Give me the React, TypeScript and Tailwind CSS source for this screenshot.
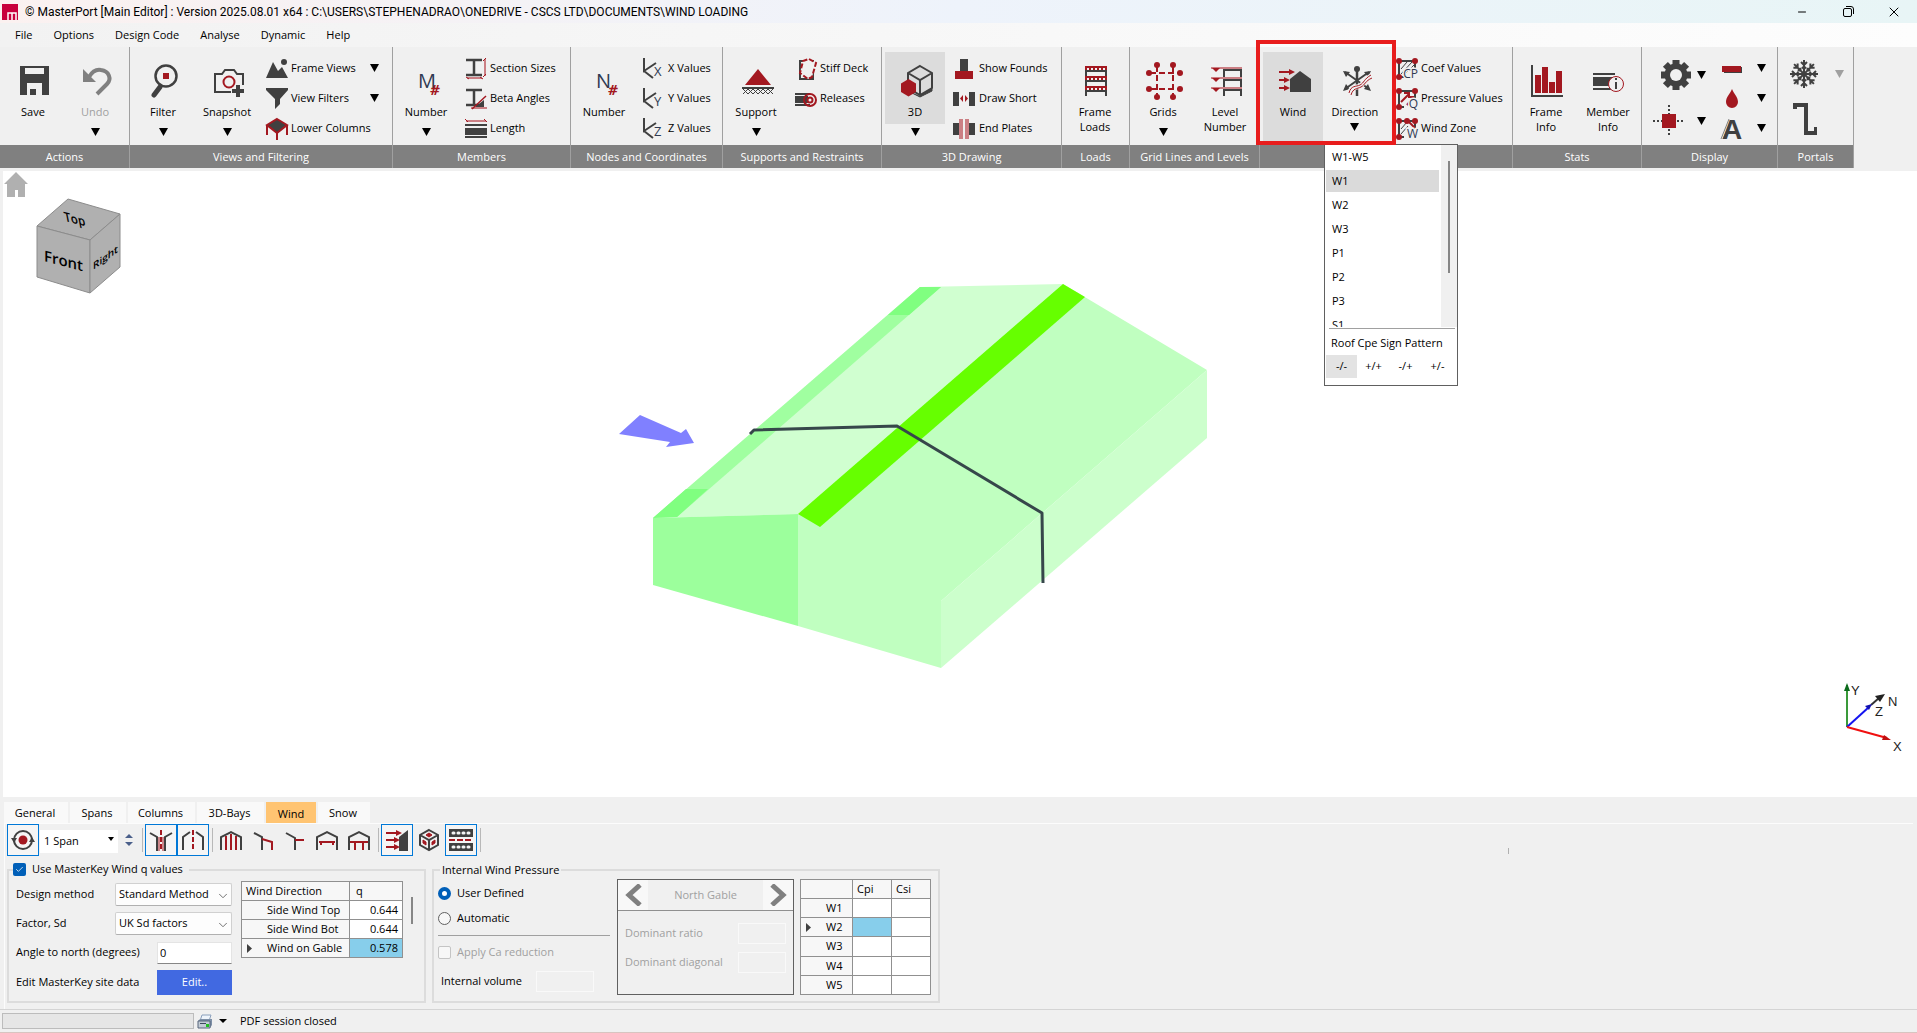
import React from 'react';
import { Check, ChevronDown, Minus, X } from 'lucide-react';

const DARK = '#404040';
const RED = '#a31820';
const PINK = '#cb7f84';
const NAVY = '#2f3a52';

type Kids = { children?: React.ReactNode };

function Big({ children }: Kids) {
    return <svg width="40" height="40" viewBox="0 0 40 40" fill="none" className="shrink-0 overflow-visible">{children}</svg>;
}

function Small({ children }: Kids) {
    return <svg width="24" height="24" viewBox="0 0 24 24" fill="none" className="shrink-0 overflow-visible">{children}</svg>;
}

function Tri({ color = '#000' }: { color?: string }) {
    return (
        <svg width="9" height="8" viewBox="0 0 9 8" className="shrink-0">
            <path d="M0 0h9L4.5 8z" fill={color} />
        </svg>
    );
}

/* ---------- large ribbon icons ---------- */

const SaveIcon = () => (
    <Big>
        <path d="M7 6h29v29H7z" fill={DARK} />
        <path d="M12 8h19v6H12zM14 23h15v12h-6v-6h-6v6h-3z" fill="#f0f0f0" />
    </Big>
);

const UndoIcon = () => (
    <Big>
        <path d="M8 9v13h13z" fill="#808080" />
        <path d="M14 17c3-5 7-8 12-7 8 1 11 9 6 14L22 34" stroke="#808080" strokeWidth="4" />
    </Big>
);

const FilterIcon = () => (
    <Big>
        <circle cx="23" cy="16" r="10.5" stroke={DARK} strokeWidth="2.5" />
        <path d="M20 13h6v6h-6z" fill={RED} />
        <path d="M17 27l-6 8" stroke={DARK} strokeWidth="5" strokeLinecap="round" />
    </Big>
);

const SnapshotIcon = () => (
    <Big>
        <path d="M24 32H8V14h7l3-4h9l3 4h6v11" stroke={DARK} strokeWidth="2" />
        <circle cx="22" cy="22" r="5.500" stroke={RED} strokeWidth="2" />
        <path d="M31 25v12M25 31h12" stroke={DARK} strokeWidth="4" />
    </Big>
);

const NumberIcon = ({ letter }: { letter: string }) => (
    <Big>
        <text x="12" y="28" fontSize="20" fill={NAVY} fontFamily="Open Sans, sans-serif">{letter}</text>
        <text x="24" y="35" fontSize="15" fontWeight="700" fontStyle="italic" fill={RED} fontFamily="Open Sans, sans-serif">#</text>
    </Big>
);

const SupportIcon = () => (
    <Big>
        <path d="M22 9l13 16H9z" fill={RED} />
        <path d="M6 28h32" stroke={DARK} strokeWidth="2" />
        <path d="M7 29l5 5 5-5 5 5 5-5 5 5 5-5M7 34l5-5 5 5 5-5 5 5 5-5 5 5" stroke={DARK} />
    </Big>
);

const CubeIcon = () => (
    <Big>
        <path d="M25 6l12 7v15l-12 7-12-7V13zM13 13l12 7 12-7M25 20v15" stroke={DARK} strokeWidth="2" />
        <path d="M25 36l12-7v2l-12 6-12-6" fill={DARK} stroke={DARK} />
        <path d="M13.500 19l7.500 4.500v8.500l-7.500 4.500L6 32v-8.500z" fill={RED} />
    </Big>
);

const FrameLoadsIcon = () => (
    <Big>
        <path d="M11 6v30M31 6v30M11 11h20M11 21h20M11 31h20" stroke={DARK} strokeWidth="2" />
        {[6, 16, 26].map((y) => (
            <g key={y}>
                <path d={`M10 ${y + 2}h22`} stroke={RED} strokeWidth="4" />
                <path d={`M12 ${y + 3}h19`} stroke="#f0f0f0" strokeWidth="2" strokeDasharray="2 2" />
            </g>
        ))}
    </Big>
);

const GridsIcon = () => (
    <Big>
        <path d="M14 5v32M30 5v32M6 13h32M6 29h32" stroke={RED} strokeWidth="2" strokeDasharray="6 3" strokeDashoffset="-1" />
        {[[14, 5], [30, 5], [6, 13], [37, 13], [6, 29], [37, 29], [14, 37], [30, 37]].map(([x, y]) => (
            <circle key={`${x}-${y}`} cx={x} cy={y} r="3" fill={RED} />
        ))}
    </Big>
);

const LevelIcon = () => (
    <Big>
        <path d="M19 9v27M36 9v27M19 10h17M19 20h17M19 30h17" stroke={DARK} strokeWidth="2" />
        {[8, 18, 28].map((y) => (
            <g key={y}>
                <path d={`M6 ${y}h31`} stroke={PINK} strokeWidth="2" />
                <path d={`M7 ${y}h8l-4 4z`} fill={RED} />
            </g>
        ))}
    </Big>
);

const WindIcon = () => (
    <Big>
        <path d="M27 11l11 8v13H17V19z" fill={DARK} />
        <path d="M6 12h11M6 20h6M6 28h6" stroke={RED} strokeWidth="2" />
        <path d="M16 9l6 3-6 3zM11 17l6 3-6 3zM11 25l6 3-6 3z" fill={RED} />
    </Big>
);

const DirectionIcon = () => (
    <Big>
        <path d="M22 8v28" stroke={DARK} strokeWidth="2.500" />
        <path d="M10 12l24 17M34 12L10 29" stroke={DARK} strokeWidth="2" />
        <circle cx="22" cy="9" r="3" fill={DARK} />
        <path d="M8 11l7 1-4 5zM36 11l-7 1 4 5zM8 31l7-2-4-5zM36 31l-7-2 4-5z" fill={DARK} />
        <path d="M14 34c2-8 7-6 11-8s4-7 11-10" stroke="#f0f0f0" strokeWidth="5" />
        <path d="M14 33c2-8 7-6 11-8s4-6 11-10M16 35c2-7 6-6 10-8s4-6 11-9" stroke={RED} />
    </Big>
);

const FrameInfoIcon = () => (
    <Big>
        <path d="M6 5v31h31" stroke={DARK} strokeWidth="2" />
        <path d="M9 15h6v18H9zM16 7h6v26h-6zM23 22h6v11h-6zM30 11h6v22h-6z" fill={RED} />
    </Big>
);

const MemberInfoIcon = () => (
    <Big>
        <path d="M5 14h22M5 29h22" stroke={DARK} strokeWidth="2" />
        <path d="M5 17h22v9H5z" fill={DARK} />
        <circle cx="28" cy="24" r="7.500" fill="#f0f0f0" stroke={RED} />
        <path d="M28 22v7M28 18v2" stroke={DARK} strokeWidth="2" />
    </Big>
);

/* ---------- small ribbon icons ---------- */

const IBeam = () => <path d="M2 4h16M2 19h16M10 4v15" stroke={DARK} strokeWidth="2.500" />;

const smallIcons: Record<string, React.ReactNode> = {
    views: <><path d="M1 22L8 6l5 9 4-4 6 11z" fill={DARK} /><circle cx="19" cy="6" r="3" fill={DARK} /></>,
    funnel: <path d="M1 2h22v2l-8 9v5l-5 5V13L1 4z" fill={DARK} />,
    lower: <><path d="M12 3l10 6-10 8L2 9z" fill={DARK} stroke={RED} strokeWidth="2" /><path d="M2 9v10M12 17v7M22 9v10" stroke={RED} strokeWidth="2" /></>,
    section: <><IBeam /><path d="M21 3v17M3 22h15" stroke={PINK} strokeWidth="2" /><path d="M19 5l3-3M19 21l3-3M2 21l3 2M16 21l3 2" stroke={RED} /></>,
    beta: <><IBeam /><path d="M20 14v7h-9z" fill={DARK} /><path d="M7 22h16" stroke={PINK} strokeWidth="2" /><path d="M8 23L22 10" stroke={RED} strokeWidth="1.500" /></>,
    length: <><path d="M2 5h20" stroke={PINK} strokeWidth="2" /><path d="M1 3l3 3M20 3l3 3" stroke={RED} /><path d="M1 9h22M1 21h22" stroke={DARK} strokeWidth="2" /><path d="M1 12h22v7H1z" fill={DARK} /></>,
    deck: <><path d="M6 5h13v18H6z" stroke={DARK} strokeWidth="2" /><path d="M15 3l7 4-4 14-4 2-8-6 3-12z" fill="#f0f0f0" stroke={RED} strokeWidth="2" strokeDasharray="5 2" /></>,
    releases: <><path d="M1 8h15M1 19h15" stroke={DARK} strokeWidth="2" /><path d="M1 10h13v7H1z" fill={DARK} /><circle cx="16" cy="14" r="6" stroke={RED} strokeWidth="2" /><circle cx="16" cy="14" r="2.500" stroke={RED} strokeWidth="2" /></>,
    founds: <><path d="M7 3h8v12H7z" fill={DARK} /><path d="M2 15h18v8H2z" fill={RED} /></>,
    short: <><path d="M0 6h6v14H0zM16 6h6v14h-6z" fill={DARK} /><path d="M10 9v7l-3-3.500zM12 9v7l3-3.500z" fill={RED} /></>,
    plates: <><path d="M0 7h6v12H0zM16 7h6v12h-6z" fill={DARK} /><path d="M6 3h4v20H6zM12 3h4v20h-4z" fill={PINK} /></>,
};

function AxisIcon({ letter }: { letter: string }) {
    return (
        <Small>
            <path d="M2 2v13l12-8M2 15l9 7" stroke={DARK} strokeWidth="2" />
            <text x="12" y="20" fontSize="13" fill={NAVY} fontFamily="Open Sans, sans-serif">{letter}</text>
        </Small>
    );
}

function ZoneIcon({ label, kind }: { label: string; kind: 'hatch' | 'arrows' | 'split' }) {
    return (
        <Small>
            <path d="M4 21V5h16v7M4 21h5" stroke={DARK} strokeWidth="2" />
            {kind === 'hatch' && <path d="M6 13l6-7M6 18L17 6M10 18l9-9" stroke={DARK} />}
            {kind === 'arrows' && <path d="M6 16l8-8M12 19l6-7M9 7h5v5M14 11h4v4" stroke={RED} strokeWidth="2" />}
            {kind === 'split' && <><path d="M6 13l6-7M6 18l7-8" stroke={DARK} /><path d="M13 5l7 7" stroke={RED} strokeWidth="2" /></>}
            <circle cx="4" cy="5" r="3" fill={RED} />
            <circle cx="20" cy="5" r="3" fill={RED} />
            <circle cx="4" cy="21" r="3" fill={RED} />
            {kind === 'split' && <circle cx="12" cy="5" r="3" fill={RED} />}
            <text x="23" y="22" textAnchor="end" fontSize="12" fill={NAVY} stroke="#f0f0f0" strokeWidth="3" paintOrder="stroke" fontFamily="Open Sans, sans-serif">{label}</text>
        </Small>
    );
}

/* ---------- ribbon parts ---------- */

function BigButton({ icon, label, active, disabled, tall, arrow }: {
    icon: React.ReactNode; label: React.ReactNode; active?: boolean; disabled?: boolean; tall?: boolean; arrow?: boolean;
}) {
    return (
        <div className="flex w-15 shrink-0 flex-col pt-[5px]">
            <button className={`flex flex-col items-center gap-1 pt-2 leading-[15px] ${tall ? 'h-[90px]' : 'h-18'} ${active ? 'bg-[#dcdcdc]' : ''} ${disabled ? 'text-[#a0a0a0]' : ''}`}>
                {icon}
                <span>{label}</span>
            </button>
            {arrow && (
                <button aria-label="More" className="flex h-4 items-center justify-center">
                    <Tri />
                </button>
            )}
        </div>
    );
}

function SmallButton({ icon, label, arrow }: { icon: React.ReactNode; label: string; arrow?: boolean }) {
    return (
        <button className="flex h-[30px] w-full items-center gap-0.5 whitespace-nowrap text-left">
            {icon}
            <span className="flex-1">{label}</span>
            {arrow && <Tri />}
        </button>
    );
}

function Group({ label, width, children }: Kids & { label: string; width: string }) {
    return (
        <section className={`relative flex shrink-0 flex-col border-r border-[#a0a0a0] ${width}`}>
            <div className="flex h-[98px] px-[3px]">{children}</div>
            <h2 className="h-[23px] bg-[#808080] text-center leading-[23px] text-white">{label}</h2>
        </section>
    );
}

function DirectionMenu() {
    return (
        <div className="absolute left-16 top-[97px] z-20 flex h-[242px] w-[134px] flex-col border border-[#606060] bg-white text-[11px]">
            <div className="flex h-[182px] overflow-hidden">
                <ul className="flex-1 pl-px">
                    {['W1-W5', 'W1', 'W2', 'W3', 'P1', 'P2', 'P3', 'S1'].map((d) => (
                        <li key={d} className="h-6 pt-px">
                            <button className={`h-[22px] w-[113px] pl-1.5 text-left ${d === 'W1' ? 'bg-[#dadada]' : ''}`}>{d}</button>
                        </li>
                    ))}
                </ul>
                <div className="w-4 bg-[#f0f0f0] pt-4">
                    <div className="mx-auto h-[112px] w-0.5 bg-[#868686]" />
                </div>
            </div>
            <div className="ml-1 mr-0.5 mt-px border-t border-[#a0a0a0]" />
            <p className="pb-0.5 pl-1.5 pt-1 leading-5">Roof Cpe Sign Pattern</p>
            <div className="flex gap-px pl-px">
                {['-/-', '+/+', '-/+', '+/-'].map((s, i) => (
                    <button key={s} className={`h-[23px] w-[31px] ${i === 0 ? 'bg-[#e3e3e3]' : ''}`}>{s}</button>
                ))}
            </div>
        </div>
    );
}

function Gear() {
    return (
        <svg width="30" height="30" viewBox="-15 -15 30 30">
            {[0, 45, 90, 135].map((a) => (
                <rect key={a} x="-3.500" y="-15" width="7" height="30" fill={DARK} transform={`rotate(${a})`} />
            ))}
            <circle r="11.500" fill={DARK} />
            <circle r="6" fill="#f0f0f0" />
        </svg>
    );
}

function Snowflake() {
    return (
        <svg width="30" height="30" viewBox="-15 -15 30 30" fill="none" stroke={DARK} strokeWidth="2">
            {[0, 45, 90, 135, 180, 225, 270, 315].map((a) => (
                <path key={a} d="M0 0v-14M-3-12l3 3 3-3M-2-7l2 2 2-2" transform={`rotate(${a})`} />
            ))}
        </svg>
    );
}

function Ribbon() {
    return (
        <div className="flex h-[121px] text-[11px]">
            <Group label="Actions" width="w-[130px]">
                <div className="flex gap-0.5">
                    <BigButton icon={<SaveIcon />} label="Save" />
                    <BigButton icon={<UndoIcon />} label="Undo" disabled arrow />
                </div>
            </Group>
            <Group label="Views and Filtering" width="w-[263px]">
                <div className="flex gap-1">
                    <BigButton icon={<FilterIcon />} label="Filter" arrow />
                    <BigButton icon={<SnapshotIcon />} label="Snapshot" arrow />
                </div>
                <div className="ml-2 w-[114px] pt-1.5">
                    <SmallButton icon={<Small>{smallIcons.views}</Small>} label="Frame Views" arrow />
                    <SmallButton icon={<Small>{smallIcons.funnel}</Small>} label="View Filters" arrow />
                    <SmallButton icon={<Small>{smallIcons.lower}</Small>} label="Lower Columns" />
                </div>
            </Group>
            <Group label="Members" width="w-[178px]">
                <BigButton icon={<NumberIcon letter="M" />} label="Number" arrow />
                <div className="ml-2 pt-1.5">
                    <SmallButton icon={<Small>{smallIcons.section}</Small>} label="Section Sizes" />
                    <SmallButton icon={<Small>{smallIcons.beta}</Small>} label="Beta Angles" />
                    <SmallButton icon={<Small>{smallIcons.length}</Small>} label="Length" />
                </div>
            </Group>
            <Group label="Nodes and Coordinates" width="w-[152px]">
                <BigButton icon={<NumberIcon letter="N" />} label="Number" />
                <div className="ml-2 pt-1.5">
                    <SmallButton icon={<AxisIcon letter="X" />} label="X Values" />
                    <SmallButton icon={<AxisIcon letter="Y" />} label="Y Values" />
                    <SmallButton icon={<AxisIcon letter="Z" />} label="Z Values" />
                </div>
            </Group>
            <Group label="Supports and Restraints" width="w-[159px]">
                <BigButton icon={<SupportIcon />} label="Support" arrow />
                <div className="ml-2 pt-1.5">
                    <SmallButton icon={<Small>{smallIcons.deck}</Small>} label="Stiff Deck" />
                    <SmallButton icon={<Small>{smallIcons.releases}</Small>} label="Releases" />
                </div>
            </Group>
            <Group label="3D Drawing" width="w-[180px]">
                <BigButton icon={<CubeIcon />} label="3D" active arrow />
                <div className="ml-2 pt-1.5">
                    <SmallButton icon={<Small>{smallIcons.founds}</Small>} label="Show Founds" />
                    <SmallButton icon={<Small>{smallIcons.short}</Small>} label="Draw Short" />
                    <SmallButton icon={<Small>{smallIcons.plates}</Small>} label="End Plates" />
                </div>
            </Group>
            <Group label="Loads" width="w-[68px]">
                <BigButton icon={<FrameLoadsIcon />} label={<>Frame<br />Loads</>} />
            </Group>
            <Group label="Grid Lines and Levels" width="w-[130px]">
                <div className="flex gap-0.5">
                    <BigButton icon={<GridsIcon />} label="Grids" arrow />
                    <BigButton icon={<LevelIcon />} label={<>Level<br />Number</>} />
                </div>
            </Group>
            <Group label="Wind" width="w-[253px]">
                <div className="flex gap-0.5">
                    <BigButton icon={<WindIcon />} label="Wind" active tall />
                    <BigButton icon={<DirectionIcon />} label={<span className="flex flex-col items-center gap-1">Direction<Tri /></span>} />
                </div>
                <div className="ml-2.5 pt-1.5">
                    <SmallButton icon={<ZoneIcon label="CP" kind="hatch" />} label="Coef Values" />
                    <SmallButton icon={<ZoneIcon label="Q" kind="arrows" />} label="Pressure Values" />
                    <SmallButton icon={<ZoneIcon label="W" kind="split" />} label="Wind Zone" />
                </div>
                <div className="pointer-events-none absolute -left-1 -top-[7px] z-30 h-[105px] w-[140px] border-4 border-[#e81c1c]" />
                <DirectionMenu />
            </Group>
            <Group label="Stats" width="w-[129px]">
                <div className="flex gap-0.5">
                    <BigButton icon={<FrameInfoIcon />} label={<>Frame<br />Info</>} />
                    <BigButton icon={<MemberInfoIcon />} label={<>Member<br />Info</>} />
                </div>
            </Group>
            <Group label="Display" width="w-[136px]">
                <div className="flex w-[61px] flex-col gap-2 pt-3">
                    <button aria-label="Settings" className="flex h-8 items-center justify-end gap-1.5">
                        <Gear />
                        <Tri />
                    </button>
                    <button aria-label="Origin" className="flex h-11 items-center justify-end gap-3">
                        <svg width="32" height="32" viewBox="0 0 32 32" stroke={DARK} strokeWidth="2">
                            <path d="M16 0v32M0 16h32" strokeDasharray="2 2" />
                            <path d="M10 10h12v12H10z" fill={RED} stroke={RED} />
                        </svg>
                        <Tri />
                    </button>
                </div>
                <div className="ml-3.5 w-[46px] pt-1.5">
                    <button aria-label="Line style" className="flex h-[30px] w-full items-center justify-between">
                        <Small><path d="M4 11h18v6H4z" fill={DARK} /><path d="M2 10h19v6H2z" fill={RED} /></Small>
                        <Tri />
                    </button>
                    <button aria-label="Colour" className="flex h-[30px] w-full items-center justify-between">
                        <Small><path d="M12 3c2 5 6 8 6 13a6 6 0 0 1-12 0c0-5 4-8 6-13z" fill={RED} /></Small>
                        <Tri />
                    </button>
                    <button aria-label="Font" className="flex h-[30px] w-full items-center justify-between">
                        <Small>
                            <path d="M1 23L9 3M3 23l8-18" stroke="#808080" />
                            <text x="2" y="23" fontSize="28" fontWeight="700" fill={DARK} fontFamily="Liberation Sans, sans-serif">A</text>
                        </Small>
                        <Tri />
                    </button>
                </div>
            </Group>
            <Group label="Portals" width="w-[76px]">
                <div className="flex flex-col gap-3 pl-2 pt-3">
                    <button aria-label="Snow" className="flex items-center gap-4">
                        <Snowflake />
                        <Tri color="#a0a0a0" />
                    </button>
                    <button aria-label="Purlins" className="ml-1 w-6">
                        <svg width="24" height="36" viewBox="0 0 24 36" fill="none">
                            <path d="M2 8V4h11v28h10v-6" stroke={DARK} strokeWidth="4" />
                        </svg>
                    </button>
                </div>
            </Group>
        </div>
    );
}

/* ---------- 3D view ---------- */

function Viewport() {
    return (
        <main className="relative ml-[3px] min-h-[500px] flex-1 overflow-hidden bg-white">
            <button aria-label="Home view" className="absolute left-px top-px">
                <svg width="24" height="25" viewBox="0 0 24 25">
                    <path d="M12 0l12 12h-3v13h-7v-7h-3v7H3V12H0z" fill="#b0b0b0" />
                </svg>
            </button>
            <svg className="absolute left-8 top-[26px]" width="88" height="98" viewBox="0 0 88 98">
                <g fill="#b0b0b0" stroke="#8c8c8c" strokeLinejoin="round">
                    <path d="M33 2l52 15-30 26L2 29z" />
                    <path d="M2 29l53 14v53L2 80z" />
                    <path d="M55 43l30-26v53L55 96z" />
                </g>
                <g fontFamily="Open Sans, sans-serif" fontWeight="600" fill="#000">
                    <text fontSize="15" transform="translate(9 64) skewY(15)">Front</text>
                    <text fontSize="12" transform="translate(30 24) rotate(14) skewX(25)">Top</text>
                    <text fontSize="10" transform="translate(58 73) skewY(-36)">Right</text>
                </g>
            </svg>
            <svg className="absolute left-[597px] top-[89px]" width="640" height="420" viewBox="0 0 640 420">
                <path d="M53 258L320 27l143-3-265 230z" fill="#d0ffd0" />
                <path d="M53 258L320 27h21L77 257z" fill="#a0ffa0" />
                <path d="M53 258l33-29h22l-31 28zM288 55l32-28h21l-32 28z" fill="#80ff80" />
                <path d="M198 254L463 24l144 86-266 231v67l-143-42z" fill="#c0ffc0" />
                <path d="M198 254L463 24l22 13-265 230z" fill="#66ff00" />
                <path d="M53 258l145-4v112L53 325z" fill="#9cff9c" />
                <path d="M341 341l266-231v68L341 408z" fill="#ccffcc" />
                <path d="M150 174l4-4 143-4 145 87 1 70" fill="none" stroke="#36474a" strokeWidth="3" strokeLinejoin="round" />
                <path d="M40 155l41 18 5-4 8 14-28 4 4-5-51-8z" fill="#8080ff" />
            </svg>
            <svg className="absolute bottom-10 right-[7px]" width="70" height="80" viewBox="0 0 70 80">
                <path d="M7 50V8" stroke="#3a9a3a" strokeWidth="2" />
                <path d="M4 14l3-8 3 8z" fill="#0c6b1c" />
                <path d="M31 28l8-7" stroke="#333" strokeWidth="2" />
                <path d="M45 17l-5 8-5-6z" fill="#222" />
                <path d="M7 50l22-20" stroke="#1414f0" strokeWidth="2" />
                <path d="M32 27l-3 6-4-4z" fill="#1010b0" />
                <path d="M7 50l40 11" stroke="#f01010" strokeWidth="2" />
                <path d="M51 63l-9 0 2-5z" fill="#c01010" />
                <g fontFamily="Liberation Sans, sans-serif" fontSize="13" fill="#222">
                    <text x="11" y="18">Y</text>
                    <text x="48" y="29">N</text>
                    <text x="35" y="39">Z</text>
                    <text x="53" y="74">X</text>
                </g>
            </svg>
        </main>
    );
}

/* ---------- bottom panel ---------- */

const tabs = [
    { name: 'General', width: 'w-16' },
    { name: 'Spans', width: 'w-14' },
    { name: 'Columns', width: 'w-[67px]' },
    { name: '3D-Bays', width: 'w-[67px]' },
    { name: 'Wind', width: 'w-[50px]' },
    { name: 'Snow', width: 'w-[52px]' },
];

function Tool({ name, on, children }: Kids & { name: string; on?: boolean }) {
    return (
        <button aria-label={name} className={`flex size-8 items-center justify-center border ${on ? 'border-[#0078d7] bg-[#f5f5f5]' : 'border-transparent'}`}>
            <Small>{children}</Small>
        </button>
    );
}

const Sep = () => <div className="ml-[3px] mr-0.5 h-6 w-px bg-[#b8b8b8]" />;

function Toolbar() {
    return (
        <div className="flex h-8 items-center pl-0.5">
            <Tool name="Rotate" on>
                <circle cx="12" cy="12" r="9" stroke={DARK} strokeWidth="2" />
                <path d="M0 10h6l-3 5zM18 14h6l-3-5z" fill={DARK} />
                <circle cx="12" cy="12" r="4.500" fill={RED} />
            </Tool>
            <div className="relative ml-px">
                <select aria-label="Span" className="h-[23px] w-[78px] appearance-none bg-white pl-1 text-[11px]">
                    <option>1 Span</option>
                </select>
                <svg className="pointer-events-none absolute right-1 top-2.5" width="6" height="4"><path d="M0 0h6L3 4z" /></svg>
            </div>
            <button aria-label="Step span" className="mx-[5px] flex w-[11px] flex-col items-center gap-1">
                <svg width="8" height="4"><path d="M0 4h8L4 0z" fill="#4a5f8a" /></svg>
                <svg width="8" height="4"><path d="M0 0h8L4 4z" fill="#4a5f8a" /></svg>
            </button>
            <Sep />
            <Tool name="Inner haunch" on>
                <path d="M1 5l7 4v14M23 5l-7 4v14" stroke={DARK} strokeWidth="2" />
                <path d="M12 2v21" stroke={RED} strokeWidth="2" strokeDasharray="5 2" />
                <path d="M10 9v14M14 9v14" stroke={RED} />
            </Tool>
            <Tool name="Apex haunch" on>
                <path d="M2 22V9l7-5M22 22V9l-7-5" stroke={DARK} strokeWidth="2" />
                <path d="M12 2v21" stroke={RED} strokeWidth="2" strokeDasharray="5 2" />
            </Tool>
            <Sep />
            <Tool name="Gable frame">
                <path d="M7 8v14M12 6v16M17 8v14" stroke={RED} strokeWidth="2" />
                <path d="M2 22V9l10-5 10 5v13" stroke={DARK} strokeWidth="2" />
            </Tool>
            <Tool name="Canopy">
                <path d="M3 5l8 4v13" stroke={DARK} strokeWidth="2" />
                <path d="M11 11l10 3v8" stroke={RED} strokeWidth="2" />
            </Tool>
            <Tool name="Bracket">
                <path d="M3 5l9 5v12" stroke={DARK} strokeWidth="2" />
                <path d="M12 12h9" stroke={RED} strokeWidth="2" />
            </Tool>
            <Tool name="Tie">
                <path d="M4 14h16M6 14v3M18 14v3" stroke={RED} strokeWidth="2" />
                <path d="M2 22V9l10-5 10 5v13" stroke={DARK} strokeWidth="2" />
            </Tool>
            <Tool name="Mezzanine">
                <path d="M3 14h18M8 14v8M16 14v8" stroke={RED} strokeWidth="2" />
                <path d="M2 22V9l10-5 10 5v13" stroke={DARK} strokeWidth="2" />
            </Tool>
            <Sep />
            <Tool name="Wind loads" on>
                <path d="M14 9l9-7v21H14z" fill={DARK} />
                <path d="M1 5h11M1 12h11M1 19h11" stroke={RED} strokeWidth="2" />
                <path d="M11 2l6 3-6 3zM9 9l6 3-6 3zM9 16l6 3-6 3z" fill={RED} />
            </Tool>
            <Tool name="3D box">
                <path d="M12 2l9 5v10l-9 5-9-5V7zM3 7l9 5 9-5M12 12v10" stroke={DARK} strokeWidth="2" />
                <path d="M12 5l3 2-3 2-3-2zM6 12l3 2v3l-3-2zM18 12l-3 2v3l3-2z" fill={RED} stroke={RED} />
            </Tool>
            <Tool name="Purlins" on>
                <path d="M0 1h24v8H0zM0 15h24v8H0z" fill={DARK} />
                <path d="M4 5h18M4 19h18" stroke="#f5f5f5" strokeWidth="3" strokeLinecap="round" strokeDasharray="1 4" />
                <path d="M0 12h24" stroke={RED} strokeWidth="2" strokeDasharray="6 2" />
            </Tool>
            <Sep />
            <div className="mb-0.5 ml-auto mr-[404px] h-1.5 w-px self-end bg-[#b0b0b0]" />
        </div>
    );
}

function Select({ id, value }: { id: string; value: string }) {
    return (
        <div className="relative">
            <select id={id} className="h-[23px] w-[117px] appearance-none rounded-xs border border-[#d0d0d0] border-b-[#b0b0b0] bg-[#fdfdfd] pl-[3px]">
                <option>{value}</option>
            </select>
            <ChevronDown className="pointer-events-none absolute right-0.5 top-[6px] size-3.5 text-[#606060]" strokeWidth={1.5} />
        </div>
    );
}

function QTable() {
    const rows = [['Side Wind Top', '0.644'], ['Side Wind Bot', '0.644'], ['Wind on Gable', '0.578']];
    return (
        <table className="w-[162px] table-fixed border-collapse border-x border-t border-[#909090] bg-[#f7f7f7] text-[11px]">
            <thead>
                <tr className="h-[19px] border-b border-[#909090] text-left">
                    <th className="w-[108px] border-r border-[#909090] pl-1 font-normal">Wind Direction</th>
                    <th className="pl-1.5 font-normal">q</th>
                </tr>
            </thead>
            <tbody>
                {rows.map(([name, q], i) => (
                    <tr key={name} className="h-[19px] border-b border-[#909090]">
                        <td className="border-r border-[#909090] leading-4">
                            <span className="flex items-center">
                                <span className="w-[25px] pl-[5px]">{i === 2 && <svg width="5" height="9"><path d="M0 0l5 4.500L0 9z" fill={DARK} /></svg>}</span>
                                {name}
                            </span>
                        </td>
                        <td className={`pr-1 text-right leading-4 ${i === 2 ? 'bg-[#87ceeb]' : 'bg-white'}`}>{q}</td>
                    </tr>
                ))}
            </tbody>
        </table>
    );
}

function CpTable() {
    return (
        <table className="h-[116px] w-[131px] table-fixed border-collapse border border-[#909090] bg-[#f7f7f7] text-[11px]">
            <thead>
                <tr className="h-[19px] border-b border-[#909090] text-left">
                    <th className="w-[52px] border-r border-[#909090]"></th>
                    <th className="border-r border-[#909090] pl-1 font-normal">Cpi</th>
                    <th className="pl-1 font-normal">Csi</th>
                </tr>
            </thead>
            <tbody>
                {['W1', 'W2', 'W3', 'W4', 'W5'].map((w) => (
                    <tr key={w} className="h-[19px] border-b border-[#909090]">
                        <td className="border-r border-[#909090] leading-4">
                            <span className="flex items-center">
                                <span className="w-[25px] pl-[5px]">{w === 'W2' && <svg width="5" height="9"><path d="M0 0l5 4.500L0 9z" fill={DARK} /></svg>}</span>
                                {w}
                            </span>
                        </td>
                        <td className={`border-r border-[#909090] ${w === 'W2' ? 'bg-[#87ceeb]' : 'bg-white'}`}></td>
                        <td className="bg-white"></td>
                    </tr>
                ))}
            </tbody>
        </table>
    );
}

function WindValues() {
    return (
        <fieldset className="h-[141px] w-[419px] border-2 border-[#dcdcdc] pl-[7px]">
            <legend className="-ml-[3px] flex h-[15px] items-center gap-1.5 pr-1.5">
                <span className="relative flex">
                    <input id="useq" type="checkbox" defaultChecked className="size-[13px] appearance-none rounded-xs bg-[#005fb8]" />
                    <Check className="pointer-events-none absolute left-0.5 top-0.5 size-[9px] text-white" />
                </span>
                <label htmlFor="useq">Use MasterKey Wind q values</label>
            </legend>
            <div className="flex pt-1.5">
                <div className="flex w-[216px] flex-col gap-1.5">
                    <div className="flex h-[23px] items-center justify-between"><label htmlFor="method">Design method</label><Select id="method" value="Standard Method" /></div>
                    <div className="flex h-[23px] items-center justify-between"><label htmlFor="factor">Factor, Sd</label><Select id="factor" value="UK Sd factors" /></div>
                    <div className="flex h-[23px] items-center justify-between">
                        <label htmlFor="angle">Angle to north (degrees)</label>
                        <input id="angle" defaultValue="0" className="h-[22px] w-[75px] border border-[#e4e4e4] border-b-[#868686] bg-white px-0.5" />
                    </div>
                    <div className="flex h-[25px] items-center justify-between">
                        <span>Edit MasterKey site data</span>
                        <button className="h-[25px] w-[75px] bg-[#4169e1] text-white">Edit..</button>
                    </div>
                </div>
                <div className="-mt-0.5 ml-[9px]"><QTable /></div>
                <div className="ml-2 mt-3.5 h-[27px] w-0.5 bg-[#868686]" />
            </div>
        </fieldset>
    );
}

function InternalPressure() {
    return (
        <fieldset className="h-[141px] w-[508px] border-2 border-[#dcdcdc] pl-1">
            <legend className="ml-0.5 h-[15px] px-0.5 leading-[15px]">Internal Wind Pressure</legend>
            <div className="flex">
                <div className="w-[172px] pt-1">
                    <label className="flex h-[25px] items-center gap-1.5">
                        <input type="radio" name="mode" defaultChecked className="size-[13px] appearance-none rounded-full border-4 border-[#005fb8] bg-white" />
                        User Defined
                    </label>
                    <label className="flex h-[25px] items-center gap-1.5">
                        <input type="radio" name="mode" className="size-[13px] appearance-none rounded-full border border-[#606060] bg-[#f7f7f7]" />
                        Automatic
                    </label>
                    <hr className="my-1 border-[#a0a0a0]" />
                    <label className="flex h-[25px] items-center gap-1.5 text-[#a0a0a0]">
                        <input type="checkbox" disabled className="size-[13px] appearance-none rounded-xs border border-[#c4c4c4] bg-[#f7f7f7]" />
                        Apply Ca reduction
                    </label>
                    <div className="flex items-center justify-between pl-[3px] pr-4 pt-1.5">
                        <label htmlFor="volume">Internal volume</label>
                        <input id="volume" disabled className="h-[21px] w-[58px] border border-[#f9f9f9]" />
                    </div>
                </div>
                <div className="ml-[7px] mt-0.5 h-[116px] w-[177px] border border-[#606060] text-[#a0a0a0]">
                    <div className="flex h-[31px] items-center border-b border-[#909090]">
                        <button disabled aria-label="Previous" className="flex h-full w-[30px] items-center justify-center bg-[#f8f8f8]">
                            <svg width="17" height="22" fill="none"><path d="M15 1L4 11l11 10" stroke="#808080" strokeWidth="5" /></svg>
                        </button>
                        <span className="flex-1 text-center">North Gable</span>
                        <button disabled aria-label="Next" className="flex h-full w-[30px] items-center justify-center bg-[#f8f8f8]">
                            <svg width="17" height="22" fill="none"><path d="M2 1l11 10L2 21" stroke="#808080" strokeWidth="5" /></svg>
                        </button>
                    </div>
                    <div className="flex flex-col gap-2 px-[7px] pt-3">
                        <div className="flex items-center justify-between"><label htmlFor="ratio">Dominant ratio</label><input id="ratio" disabled className="h-[21px] w-12 border border-[#f9f9f9]" /></div>
                        <div className="flex items-center justify-between"><label htmlFor="diagonal">Dominant diagonal</label><input id="diagonal" disabled className="h-[21px] w-12 border border-[#f9f9f9]" /></div>
                    </div>
                </div>
                <div className="ml-1.5 mt-0.5"><CpTable /></div>
            </div>
        </fieldset>
    );
}

function BottomPanel() {
    return (
        <div className="px-1 pt-[5px]">
            <div className="flex gap-0.5">
                {tabs.map((t) => (
                    <button key={t.name} className={`h-[21px] text-[11px] ${t.width} ${t.name === 'Wind' ? 'bg-[#ffc472] pt-0.5' : 'bg-[#f9f9f9] pr-0.5'}`}>
                        <span className="block leading-[19px]">{t.name}</span>
                    </button>
                ))}
            </div>
            <div className="border-l border-t border-[#fcfcfc]">
                <Toolbar />
                <div className="flex gap-1.5 pl-0.5 pb-1.5 pt-1.5 text-[11px]">
                    <WindValues />
                    <InternalPressure />
                </div>
            </div>
        </div>
    );
}

function StatusBar() {
    return (
        <footer className="flex h-6 items-center border-b border-t border-b-[#d8c4c0] border-t-[#d4d4d4] text-[11px]">
            <div className="ml-0.5 h-4 w-48 border border-[#bcbcbc] bg-[#e6e6e6]" />
            <button className="ml-[3px] flex items-center gap-1.5" aria-label="Print">
                <svg width="16" height="15" viewBox="0 0 16 15">
                    <path d="M5 1h9l-2 6H3z" fill="#eef4fb" stroke="#8aa0bc" />
                    <path d="M1 7l2-2h12v6l-2 3H1z" fill="#7d8fa6" />
                    <path d="M1 7h12v7H1z" fill="#c3ccd6" stroke="#56647a" />
                    <path d="M3 9h6v1H3z" fill="#3c4a5c" />
                    <path d="M9 10h3v3H9z" fill="#22c022" />
                </svg>
                <svg width="8" height="4"><path d="M0 0h8L4 4z" /></svg>
            </button>
            <span className="ml-[13px]">PDF session closed</span>
        </footer>
    );
}

export default function App() {
    return (
        <div className="flex min-h-screen flex-col bg-[#f0f0f0] font-['Open_Sans',sans-serif] text-black">
            <header className="flex h-[23px] items-center bg-linear-to-r from-[#fbf1f0] via-[#eef3fb] to-[#e8f5f6] pl-0.5 text-[12px]">
                <svg width="16" height="16" viewBox="0 0 16 16">
                    <path d="M0 0h16v16H0z" fill="#c8003c" />
                    <path d="M6 16V9h8v7M10 9v7" stroke="#fff" strokeWidth="1.500" fill="none" />
                </svg>
                <h1 className="ml-[7px] flex-1 whitespace-nowrap font-[Roboto,sans-serif]">© MasterPort [Main Editor] : Version 2025.08.01 x64 : C:\USERS\STEPHENADRAO\ONEDRIVE - CSCS LTD\DOCUMENTS\WIND LOADING</h1>
                <button aria-label="Minimise" className="flex w-[46px] justify-center"><Minus className="size-3" strokeWidth={2} /></button>
                <button aria-label="Restore" className="flex w-[46px] justify-center">
                    <svg width="11" height="11" viewBox="0 0 11 11" fill="none" stroke="#000">
                        <rect x=".5" y="2.500" width="8" height="8" rx="1.500" />
                        <path d="M3 .5h5A2.500 2.500 0 0 1 10.500 3v5" />
                    </svg>
                </button>
                <button aria-label="Close" className="flex w-[46px] justify-center"><X className="size-4" strokeWidth={1.5} /></button>
            </header>
            <nav className="flex h-6 items-center gap-[21px] bg-linear-to-r from-[#f2f2f2] to-[#fdfdfd] pl-[15px] text-[11px]">
                {['File', 'Options', 'Design Code', 'Analyse', 'Dynamic', 'Help'].map((m) => <button key={m}>{m}</button>)}
            </nav>
            <Ribbon />
            <div className="h-[3px]" />
            <Viewport />
            <BottomPanel />
            <StatusBar />
        </div>
    );
}
